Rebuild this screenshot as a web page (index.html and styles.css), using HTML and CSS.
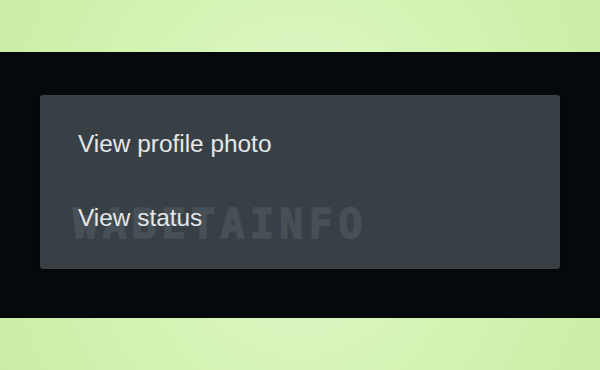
FILE: index.html
```html
<!DOCTYPE html>
<html>
<head>
<meta charset="utf-8">
<link rel="stylesheet" href="styles.css">
</head>
<body>
<div class="stage">
  <div class="band">
    <div class="menu">
      <div class="watermark">WABETAINFO</div>
      <div class="item">View profile photo</div>
      <div class="item">View status</div>
    </div>
  </div>
</div>
</body>
</html>
```

FILE: styles.css
```css
html, body {
  margin: 0;
  padding: 0;
}
body {
  width: 600px;
  height: 370px;
  overflow: hidden;
  background: radial-gradient(ellipse 70% 140% at 50% 50%, #e2f8cd 0%, #d3f3b3 45%, #c3ea9c 100%);
  font-family: "Liberation Sans", Arial, sans-serif;
}
.stage {
  padding-top: 52px;
}
.band {
  height: 266px;
  background: #05090c;
  padding: 43px 40px 0 40px;
  box-sizing: border-box;
}
.menu {
  position: relative;
  width: 520px;
  height: 174px;
  box-sizing: border-box;
  padding: 12px 0 14px 38px;
  background: #384046;
  border-radius: 3px;
  box-shadow: 0 1px 2px rgba(0,0,0,0.4);
}
.item {
  position: relative;
  z-index: 1;
  height: 74px;
  line-height: 74px;
  font-size: 24.4px;
  color: #e4e7e9;
}
.watermark {
  position: absolute;
  left: 33px;
  top: 107px;
  font-family: "DejaVu Sans Mono", monospace;
  font-weight: bold;
  font-size: 40px;
  line-height: 44px;
  letter-spacing: 5.4px;
  color: #475056;
  -webkit-text-stroke: 1.5px #475056;
  z-index: 0;
}
```
